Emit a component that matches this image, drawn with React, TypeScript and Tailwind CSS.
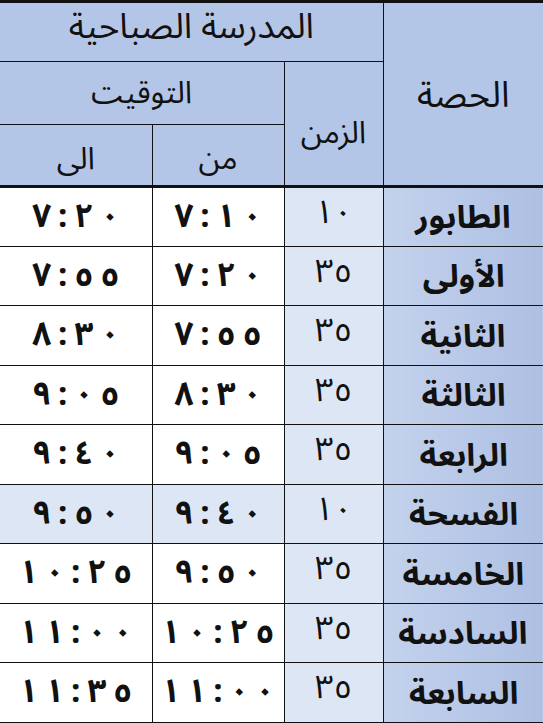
const rows = [
  { name: "الطابور", mins: "١٠", from: "٧:١٠", to: "٧:٢٠", light: false },
  { name: "الأولى", mins: "٣٥", from: "٧:٢٠", to: "٧:٥٥", light: false },
  { name: "الثانية", mins: "٣٥", from: "٧:٥٥", to: "٨:٣٠", light: false },
  { name: "الثالثة", mins: "٣٥", from: "٨:٣٠", to: "٩:٠٥", light: false },
  { name: "الرابعة", mins: "٣٥", from: "٩:٠٥", to: "٩:٤٠", light: false },
  { name: "الفسحة", mins: "١٠", from: "٩:٤٠", to: "٩:٥٠", light: true },
  { name: "الخامسة", mins: "٣٥", from: "٩:٥٠", to: "١٠:٢٥", light: false },
  { name: "السادسة", mins: "٣٥", from: "١٠:٢٥", to: "١١:٠٠", light: false },
  { name: "السابعة", mins: "٣٥", from: "١١:٠٠", to: "١١:٣٥", light: false },
];

// letter-spacing is dropped on Arabic runs, so space the characters by hand
function Time({ value }: { value: string }) {
  return (
    <span dir="ltr" className="inline-flex items-center justify-center gap-[7px] font-bold text-[33px] leading-[1.2]">
      {value.split("").map((ch, i) => (
        <span key={i}>{ch}</span>
      ))}
    </span>
  );
}

export default function App() {
  return (
    <div className="w-[543px] h-[723px] overflow-hidden bg-white font-['Noto_Sans_Arabic','Noto_Sans',sans-serif] text-[#111]">
      <table dir="rtl" className="w-full table-fixed border-collapse">
        <colgroup>
          <col className="w-[160px]" />
          <col className="w-[99px]" />
          <col className="w-[132px]" />
          <col className="w-[152px]" />
        </colgroup>
        <thead>
          <tr className="h-[60px] border-t-[3px] border-[#111]">
            <th rowSpan={3} className="bg-[#b4c6e7] border-l-[1.5px] border-[#111] font-normal text-[36px] leading-[1.3] pt-1">
              الحصة
            </th>
            <th colSpan={3} className="bg-[#b4c6e7] border-b-[1.5px] border-[#111] font-normal text-[35px] leading-[1.3] pb-2">
              المدرسة الصباحية
            </th>
          </tr>
          <tr className="h-[63px]">
            <th rowSpan={2} className="bg-[#b4c6e7] border-l-[1.5px] border-[#111] font-normal text-[31px] leading-[1.3] pt-5">
              الزمن
            </th>
            <th colSpan={2} className="bg-[#b4c6e7] border-b-[1.5px] border-[#111] font-normal text-[31px] leading-[1.3]">
              التوقيت
            </th>
          </tr>
          <tr className="h-[62px] border-b-[3px] border-[#111]">
            <th className="bg-[#b4c6e7] border-l-[1.5px] border-[#111] font-normal text-[31px] leading-[1.3] pt-2">من</th>
            <th className="bg-[#b4c6e7] font-normal text-[31px] leading-[1.3] pt-2">الى</th>
          </tr>
        </thead>
        <tbody>
          {rows.map((r) => (
            <tr key={r.name} className="h-[59.5px] border-b-[1.5px] border-[#111]">
              <td className="bg-gradient-to-r from-[#c3d2ec] to-[#aebfe3] border-l-[1.5px] border-[#111] text-center">
                <span className="inline-block scale-x-[1.06] font-bold text-[31px] leading-[1.2] pt-1">{r.name}</span>
              </td>
              <td className="bg-[#dce6f4] border-l-[1.5px] border-[#111] text-center text-[33px] leading-[1.2] pb-2">
                {r.mins}
              </td>
              <td className={`${r.light ? "bg-[#dce6f4]" : "bg-white"} border-l-[1.5px] border-[#111] text-center`}>
                <Time value={r.from} />
              </td>
              <td className={`${r.light ? "bg-[#dce6f4]" : "bg-white"} text-center`}>
                <Time value={r.to} />
              </td>
            </tr>
          ))}
        </tbody>
      </table>
    </div>
  );
}
